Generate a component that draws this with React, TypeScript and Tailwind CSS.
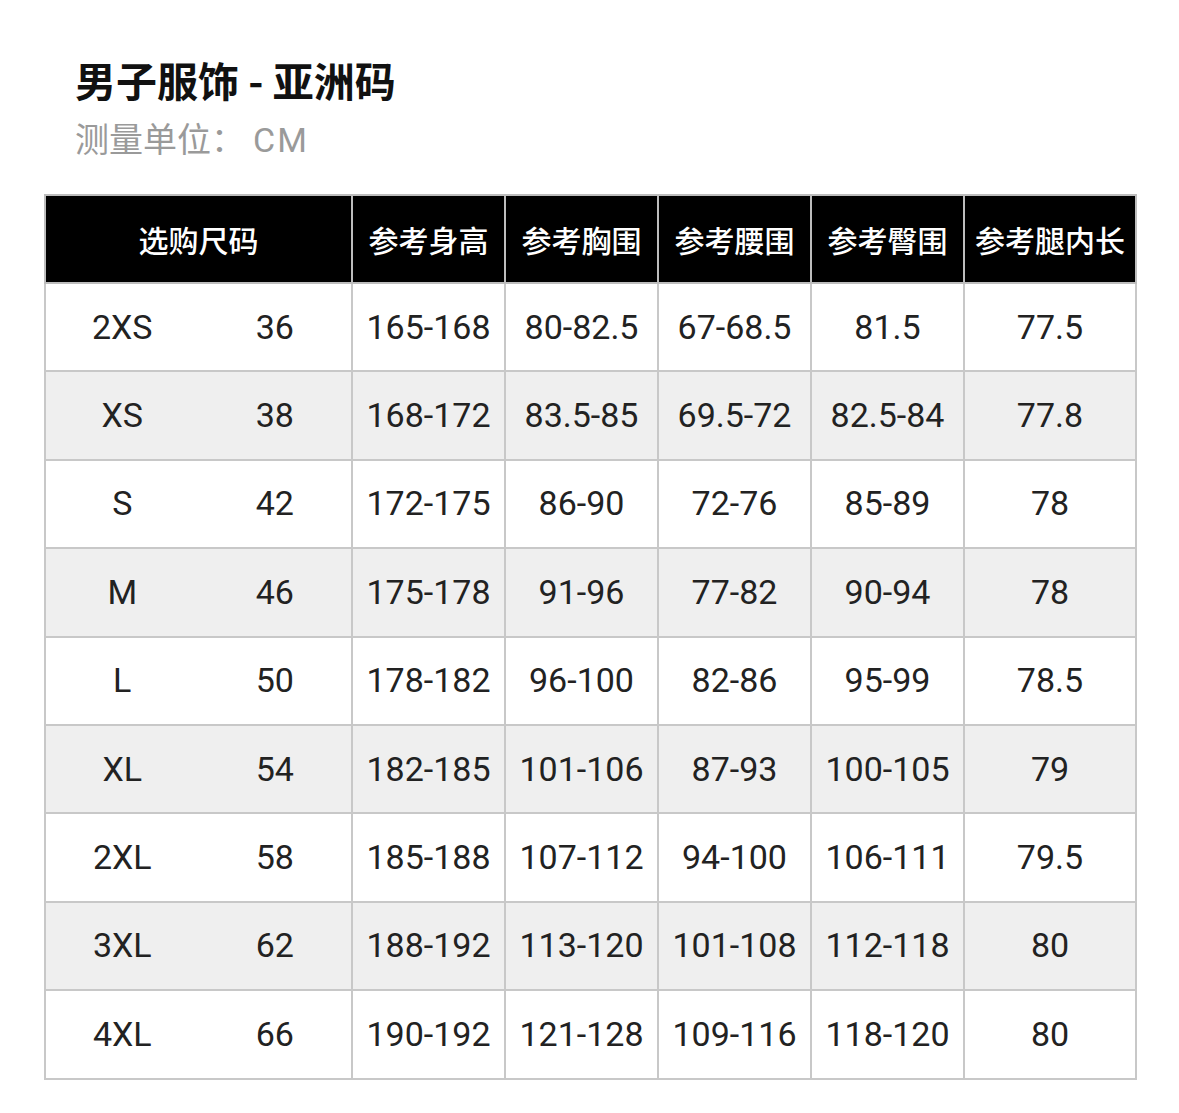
const headers = ["参考身高", "参考胸围", "参考腰围", "参考臀围", "参考腿内长"];

const rows: string[][] = [
  ["2XS", "36", "165-168", "80-82.5", "67-68.5", "81.5", "77.5"],
  ["XS", "38", "168-172", "83.5-85", "69.5-72", "82.5-84", "77.8"],
  ["S", "42", "172-175", "86-90", "72-76", "85-89", "78"],
  ["M", "46", "175-178", "91-96", "77-82", "90-94", "78"],
  ["L", "50", "178-182", "96-100", "82-86", "95-99", "78.5"],
  ["XL", "54", "182-185", "101-106", "87-93", "100-105", "79"],
  ["2XL", "58", "185-188", "107-112", "94-100", "106-111", "79.5"],
  ["3XL", "62", "188-192", "113-120", "101-108", "112-118", "80"],
  ["4XL", "66", "190-192", "121-128", "109-116", "118-120", "80"],
];

export default function App() {
  return (
    <div className="min-h-[1113px] bg-white px-[44px] pt-[54px] font-['Noto_Sans_CJK_SC',sans-serif]">
      <h1 className="pl-[31px] text-[41px] leading-[50px] font-bold text-[#111]">
        男子服饰 - 亚洲码
      </h1>
      <p className="mt-[10px] pl-[31px] text-[34px] leading-[48px] text-[#9a9a9a]">
        测量单位：<span className="pl-[8px] font-['Roboto',sans-serif] tracking-[2px]">CM</span>
      </p>
      <table className="mt-[30px] w-[1091px] table-fixed border-collapse">
        <colgroup>
          <col className="w-[307px]" />
          <col className="w-[153px]" />
          <col className="w-[153px]" />
          <col className="w-[153px]" />
          <col className="w-[153px]" />
          <col className="w-[172px]" />
        </colgroup>
        <thead>
          <tr className="h-[88px] bg-black text-white">
            <th className="border-2 border-[#bdbdbd] text-[30px] font-medium">选购尺码</th>
            {headers.map((h) => (
              <th key={h} className="border-2 border-[#bdbdbd] text-[30px] font-medium">
                {h}
              </th>
            ))}
          </tr>
        </thead>
        <tbody className="font-['Roboto',sans-serif] text-[34px] text-[#222]">
          {rows.map((r, i) => (
            <tr key={r[0]} className={i % 2 === 1 ? "h-[88.4px] bg-[#efefef]" : "h-[88.4px] bg-white"}>
              <td className="border-2 border-[#c8c8c8] p-0">
                <div className="flex">
                  <span className="w-1/2 text-center">{r[0]}</span>
                  <span className="w-1/2 text-center">{r[1]}</span>
                </div>
              </td>
              {r.slice(2).map((v, j) => (
                <td key={j} className="border-2 border-[#c8c8c8] p-0 text-center">
                  {v}
                </td>
              ))}
            </tr>
          ))}
        </tbody>
      </table>
    </div>
  );
}
